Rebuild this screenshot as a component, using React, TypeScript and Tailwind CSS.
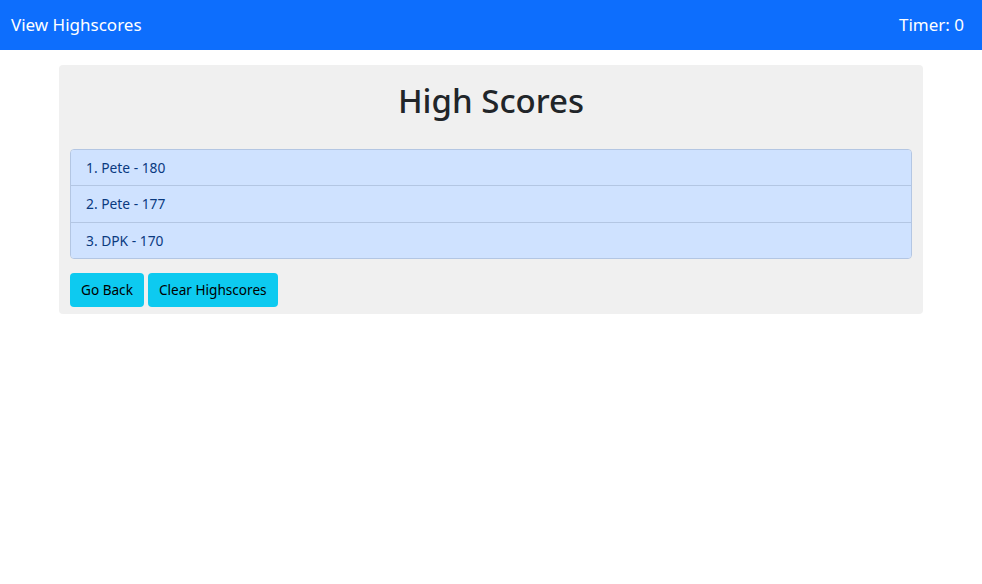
export default function App() {
  const scores = [
    { name: "Pete", score: 180 },
    { name: "Pete", score: 177 },
    { name: "DPK", score: 170 },
  ];

  return (
    <div
      className="min-h-screen bg-white"
      style={{ fontFamily: '"Noto Sans", "Open Sans", sans-serif' }}
    >
      {/* Navbar */}
      <nav className="h-[50px] bg-[#0d6efd] flex items-center justify-between px-[11px] pr-[18px] text-white text-[17px]">
        <span>View Highscores</span>
        <span>Timer: 0</span>
      </nav>

      {/* Card */}
      <main className="px-[59px] pt-[15px]">
        <div className="bg-[#f0f0f0] rounded px-[11px] pb-[7px]">
          <h1 className="text-[33px] leading-[72px] text-center text-[#212529] font-medium mb-[12px]">
            High Scores
          </h1>

          <ul className="border border-[#b3c6e3] rounded overflow-hidden">
            {scores.map((s, i) => (
              <li
                key={i}
                className={
                  "bg-[#cfe2ff] text-[#0a3a7f] text-[13.8px] leading-[21.3px] py-[7px] px-[15px] " +
                  (i > 0 ? "border-t border-[#b3c6e3]" : "")
                }
              >
                {i + 1}. {s.name} - {s.score}
              </li>
            ))}
          </ul>

          <div className="flex gap-[4px] mt-[14px]">
            <button className="bg-[#0dcaf0] text-black text-[13.6px] leading-[20px] h-[34px] px-[11px] rounded">
              Go Back
            </button>
            <button className="bg-[#0dcaf0] text-black text-[13.6px] leading-[20px] h-[34px] px-[11px] rounded">
              Clear Highscores
            </button>
          </div>
        </div>
      </main>
    </div>
  );
}
